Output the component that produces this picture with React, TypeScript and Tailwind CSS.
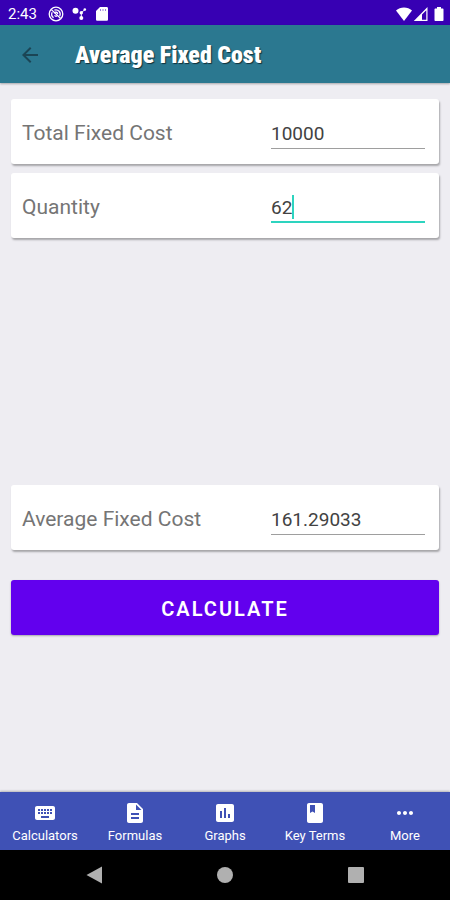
import { useState } from "react";
import type { ReactNode } from "react";

type FieldProps = {
  id: string;
  label: string;
  value: string;
  active?: boolean;
  readOnly?: boolean;
  onChange?: (value: string) => void;
};

function Field({ id, label, value, active, readOnly, onChange }: FieldProps) {
  return (
    <div className="flex h-[65px] items-center justify-between rounded-[3px] bg-white pl-[11px] pr-[14px] pt-[3px] shadow-[1px_2px_2px_rgba(0,0,0,0.3)]">
      <label htmlFor={id} className="text-[21px] leading-6 text-[#757575]">
        {label}
      </label>
      <div className="relative w-[154px]">
        <input
          id={id}
          type="text"
          inputMode="decimal"
          value={value}
          readOnly={readOnly}
          onChange={(e) => onChange?.(e.target.value)}
          className={
            active
              ? "block h-8 w-full border-b-2 border-[#2dd4bf] bg-transparent pt-[3px] text-[19px] text-[#424242] caret-transparent outline-none"
              : "block h-[31px] w-full border-b border-[#9e9e9e] bg-transparent pt-0.5 text-[19px] text-[#424242] outline-none"
          }
        />
        {/* Text cursor, sits right after the typed value */}
        {active && (
          <span className="pointer-events-none absolute left-0 top-1 flex h-6 border-r-2 border-[#2dd4bf] text-[19px]">
            <span className="invisible">{value}</span>
          </span>
        )}
      </div>
    </div>
  );
}

function StatusBar() {
  return (
    <div className="flex h-[25px] items-center bg-[#3700b3] pl-2 pr-[5px] pt-0.5 text-white">
      <span className="text-[15px] leading-5">2:43</span>
      <svg className="ml-[11px] size-4" viewBox="0 0 16 16" fill="none" stroke="currentColor" strokeWidth="1.3">
        <circle cx="8" cy="8" r="6.8" />
        <path d="M5.600 11.600A4.300 4.300 0 0 1 4.200 6.200M6.400 4.100a4.300 4.300 0 0 1 5.300 6M3.400 3.600l9 8.600" />
        <path d="M6.300 7.200c.8-1.600 3.400-1.200 3.400.8M6.500 9.400c.7.8 1.700 1 2.600.5" />
      </svg>
      <svg className="ml-2 size-4" viewBox="0 0 16 16" fill="currentColor">
        <circle cx="3.500" cy="4.800" r="3" />
        <circle cx="9.300" cy="6.800" r="1.700" />
        <circle cx="12.800" cy="3.600" r="1.300" />
        <circle cx="9.300" cy="12" r="2" />
        <path d="M9.300 6.800 12.800 3.600M9.300 6.800V12" stroke="currentColor" strokeWidth="1" />
      </svg>
      <svg className="ml-1.5 size-4" viewBox="0 0 16 16" fill="currentColor">
        <path d="M6 1h6.600c.8 0 1.400.6 1.400 1.400v11c0 .8-.6 1.400-1.400 1.400H3.400c-.8 0-1.400-.6-1.400-1.400V5z" />
        <path d="M6.500 3v2M9 3v2M11.500 3v2" stroke="#3700b3" strokeOpacity=".5" strokeWidth="1" />
      </svg>
      <svg className="ml-auto size-4" viewBox="0 0 16 16" fill="currentColor">
        <path d="M8 15 0 4.500C2.200 2.500 5 1.400 8 1.400s5.800 1.100 8 3.100z" />
      </svg>
      <svg className="ml-px size-4" viewBox="0 0 16 16" fill="currentColor">
        <path fillRule="evenodd" d="M14.500 1v14H.8zM13.300 4.200 9 8.600v5.200h4.300z" />
      </svg>
      <svg className="ml-1 h-4 w-3" viewBox="0 0 12 16" fill="currentColor">
        <path d="M4 1h4v1.500h1.500c.6 0 1 .4 1 1V14c0 .6-.4 1-1 1h-7c-.6 0-1-.4-1-1V3.500c0-.6.4-1 1-1H4z" />
      </svg>
    </div>
  );
}

const tabs: { label: string; icon: ReactNode }[] = [
  {
    label: "Calculators",
    icon: (
      <path d="M20 5H4c-1.100 0-1.990.9-1.990 2L2 17c0 1.100.9 2 2 2h16c1.100 0 2-.9 2-2V7c0-1.100-.9-2-2-2zm-9 3h2v2h-2V8zm0 3h2v2h-2v-2zM8 8h2v2H8V8zm0 3h2v2H8v-2zm-1 2H5v-2h2v2zm0-3H5V8h2v2zm9 7H8v-2h8v2zm0-4h-2v-2h2v2zm0-3h-2V8h2v2zm3 3h-2v-2h2v2zm0-3h-2V8h2v2z" />
    ),
  },
  {
    label: "Formulas",
    icon: (
      <path d="M14 2H6c-1.100 0-1.990.9-1.990 2L4 20c0 1.100.89 2 1.990 2H18c1.100 0 2-.9 2-2V8l-6-6zm2 16H8v-2h8v2zm0-4H8v-2h8v2zm-3-5V3.500L18.500 9H13z" />
    ),
  },
  {
    label: "Graphs",
    icon: (
      <path d="M19 3H5c-1.100 0-2 .9-2 2v14c0 1.100.9 2 2 2h14c1.100 0 2-.9 2-2V5c0-1.100-.9-2-2-2zM9 17H7v-7h2v7zm4 0h-2V7h2v10zm4 0h-2v-4h2v4z" />
    ),
  },
  {
    label: "Key Terms",
    icon: (
      <path
        fillRule="evenodd"
        d="M6 2h12c1.100 0 2 .9 2 2v16c0 1.100-.9 2-2 2H6c-1.100 0-2-.9-2-2V4c0-1.100.9-2 2-2zm1 2v8l2.500-1.500L12 12V4z"
      />
    ),
  },
  {
    label: "More",
    icon: (
      <path d="M6 10c-1.100 0-2 .9-2 2s.9 2 2 2 2-.9 2-2-.9-2-2-2zm12 0c-1.100 0-2 .9-2 2s.9 2 2 2 2-.9 2-2-.9-2-2-2zm-6 0c-1.100 0-2 .9-2 2s.9 2 2 2 2-.9 2-2-.9-2-2-2z" />
    ),
  },
];

export default function App() {
  const [fixedCost, setFixedCost] = useState("10000");
  const [quantity, setQuantity] = useState("62");
  const [average, setAverage] = useState("161.29033");

  const calculate = () => {
    const result = Number(fixedCost) / Number(quantity);
    setAverage(Number.isFinite(result) ? String(Math.fround(result)).slice(0, 9) : "");
  };

  return (
    <div className="flex min-h-screen flex-col bg-[#eeedf2] font-['Roboto',sans-serif]">
      <StatusBar />

      <header className="flex h-[58px] items-center bg-[#2b7890] pl-[18px] pt-0.5 shadow-[0_1px_2px_rgba(0,0,0,0.3)]">
        <button type="button" aria-label="Back" className="text-[#1b4555]">
          <svg className="size-6" viewBox="0 0 24 24" fill="currentColor">
            <path d="M20 11H7.830l5.590-5.590L12 4l-8 8 8 8 1.410-1.410L7.830 13H20v-2z" />
          </svg>
        </button>
        <h1 className="ml-[33px] font-['Roboto_Condensed','Roboto',sans-serif] text-[24px] font-black leading-7 text-white [text-shadow:1px_1px_1px_rgba(0,0,0,0.6)]">
          Average Fixed Cost
        </h1>
      </header>

      <main className="flex flex-1 flex-col px-[11px] pt-4">
        <div className="flex flex-col gap-[9px]">
          <Field id="fixed-cost" label="Total Fixed Cost" value={fixedCost} onChange={setFixedCost} />
          <Field id="quantity" label="Quantity" value={quantity} onChange={setQuantity} active />
        </div>
        <div className="mt-[247px]">
          <Field id="average" label="Average Fixed Cost" value={average} readOnly />
        </div>
        <button
          type="button"
          onClick={calculate}
          className="mt-[30px] h-[55px] rounded-[3px] bg-[#6200ee] pt-0.5 text-[20px] font-semibold tracking-widest text-white shadow-[0_1px_2px_rgba(0,0,0,0.3)]"
        >
          CALCULATE
        </button>
      </main>

      <nav className="grid h-[58px] grid-cols-5 bg-[#3f51b5] text-white shadow-[0_-1px_2px_rgba(0,0,0,0.25)]">
        {tabs.map((tab) => (
          <button key={tab.label} type="button" className="flex flex-col items-center pt-[9px]">
            <svg className="size-6" viewBox="0 0 24 24" fill="currentColor">
              {tab.icon}
            </svg>
            <span className="mt-[3px] text-[13px] leading-4">{tab.label}</span>
          </button>
        ))}
      </nav>

      {/* System navigation */}
      <div className="flex h-[50px] items-center justify-between bg-black px-[84px] text-[#b0b0b0]">
        <button type="button" aria-label="System back">
          <svg className="size-5" viewBox="0 0 20 20" fill="currentColor">
            <path d="M18 1.500v17L2.500 10z" />
          </svg>
        </button>
        <button type="button" aria-label="Home">
          <svg className="size-5" viewBox="0 0 20 20" fill="currentColor">
            <circle cx="10" cy="10" r="8" />
          </svg>
        </button>
        <button type="button" aria-label="Recent apps">
          <svg className="size-5" viewBox="0 0 20 20" fill="currentColor">
            <rect x="2" y="2" width="16" height="16" rx="1" />
          </svg>
        </button>
      </div>
    </div>
  );
}
